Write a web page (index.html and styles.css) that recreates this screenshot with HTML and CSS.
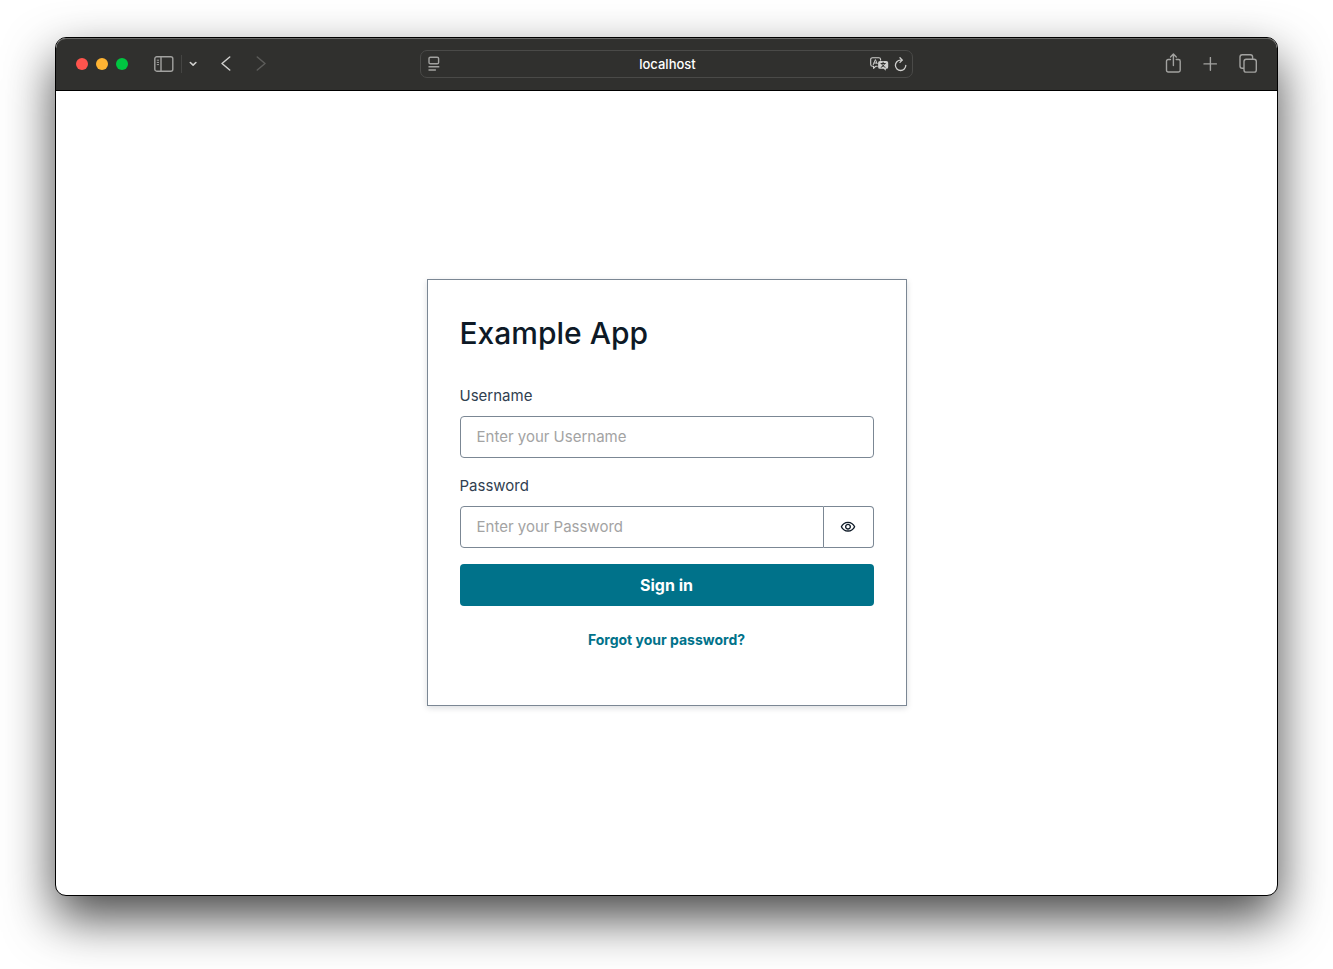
FILE: index.html
```html
<!DOCTYPE html>
<html lang="en">
<head>
<meta charset="utf-8">
<title>Example App</title>
<link rel="stylesheet" href="styles.css">
</head>
<body>
<div class="window">
  <header class="toolbar">
    <div class="toolbar-left">
      <div class="lights">
        <button class="light light-close" aria-label="Close"></button>
        <button class="light light-minimize" aria-label="Minimize"></button>
        <button class="light light-zoom" aria-label="Zoom"></button>
      </div>
      <div class="sidebar-group">
        <button class="tool" aria-label="Sidebar">
          <svg width="20" height="16" viewBox="0 0 20 16" fill="none" stroke="currentColor" stroke-width="1.4"><rect x=".8" y=".8" width="18" height="14.4" rx="2"/><path d="M7 1v14"/><path d="M2.8 4.2h2.2M2.8 6.4h2.2M2.8 8.6h2.2" stroke-width="1"/></svg>
        </button>
        <span class="divider"></span>
        <button class="tool tool-bright" aria-label="Tab groups">
          <svg width="9" height="6" viewBox="0 0 9 6" fill="none" stroke="currentColor" stroke-width="1.6" stroke-linecap="round" stroke-linejoin="round"><path d="M1.3 1.5l2.800 2.700 2.800-2.700"/></svg>
        </button>
      </div>
      <div class="nav-group">
        <button class="tool tool-bright" aria-label="Back">
          <svg width="10" height="16" viewBox="0 0 10 16" fill="none" stroke="currentColor" stroke-width="1.5" stroke-linecap="round" stroke-linejoin="round"><path d="M8.700 1L1 7.500l7.700 6.500"/></svg>
        </button>
        <button class="tool tool-disabled" aria-label="Forward" disabled>
          <svg width="10" height="16" viewBox="0 0 10 16" fill="none" stroke="currentColor" stroke-width="1.5" stroke-linecap="round" stroke-linejoin="round"><path d="M1.300 1L9 7.500l-7.700 6.500"/></svg>
        </button>
      </div>
    </div>
    <div class="address">
      <button class="tool" aria-label="Page menu">
        <svg width="12" height="16" viewBox="0 0 12 16" fill="none" stroke="currentColor"><rect x="1" y="1.200" width="9.600" height="6.600" rx="1.400" stroke-width="1.400"/><path d="M.5 10.700h10.800M.5 14h7.400" stroke-width="1.500"/></svg>
      </button>
      <span class="host">localhost</span>
      <div class="address-actions">
        <button class="tool tool-bright" aria-label="Translate">
          <svg width="19" height="14" viewBox="0 0 19 14" fill="none" stroke="currentColor" stroke-linecap="round" stroke-linejoin="round"><path d="M7.200 9.300H5.600l-2 2V9.300H2.500a1.800 1.800 0 0 1-1.800-1.800v-5A1.800 1.800 0 0 1 2.500.7h6.300a1.800 1.800 0 0 1 1.800 1.800v.6" stroke-width="1.100"/><path d="M3.300 7.600l2.100-5 1.700 4M4 6h2.600" stroke-width="1"/><path d="M10 3.900h6.300a1.900 1.900 0 0 1 1.900 1.900v4.100a1.900 1.900 0 0 1-1.900 1.900h-.5v1.900l-2.100-1.900H10a1.900 1.900 0 0 1-1.900-1.900V5.800A1.900 1.900 0 0 1 10 3.900z" fill="currentColor" stroke="none"/><path d="M13.100 5.200v1M11 6.500h4.300M14.500 6.700c-.5 1.700-1.700 3-3.300 3.500M11.800 6.900c.6 1.600 1.700 2.700 3.300 3.300" stroke="#30302e" stroke-width="1"/></svg>
        </button>
        <button class="tool tool-bright" aria-label="Reload">
          <svg width="13" height="15" viewBox="0 0 13 15" fill="none" stroke="currentColor" stroke-width="1.300" stroke-linecap="round" stroke-linejoin="round"><path d="M7.800 3.100H6.500a5.200 5.200 0 1 0 5.300 5.200"/><path d="M6 .8l2.300 2.300L6 5.400"/></svg>
        </button>
      </div>
    </div>
    <div class="toolbar-right">
      <button class="tool" aria-label="Share">
        <svg width="16" height="22" viewBox="0 0 16 22" fill="none" stroke="currentColor" stroke-width="1.400" stroke-linecap="round" stroke-linejoin="round"><path d="M5.500 6.500H3.200a1.700 1.700 0 0 0-1.700 1.700v9.100A1.700 1.700 0 0 0 3.200 19h10.300a1.700 1.700 0 0 0 1.700-1.700V8.200a1.700 1.700 0 0 0-1.700-1.700h-2.300"/><path d="M8.400 12.500V1M5.500 3.900L8.400 1l2.900 2.900"/></svg>
      </button>
      <button class="tool" aria-label="New tab">
        <svg width="14" height="14" viewBox="0 0 14 14" fill="none" stroke="currentColor" stroke-width="1.400" stroke-linecap="round"><path d="M7.400 .6v12.600M1 6.900h12.400"/></svg>
      </button>
      <button class="tool" aria-label="Tab overview">
        <svg width="18" height="20" viewBox="0 0 18 20" fill="none" stroke="currentColor" stroke-width="1.400" stroke-linejoin="round"><rect x="5" y="5.200" width="12.300" height="12.900" rx="2.200"/><path d="M5 14.300H3.200A2.200 2.200 0 0 1 1 12.100V3A2.200 2.200 0 0 1 3.200.8h8.200A2.200 2.200 0 0 1 13.600 3v2.200"/></svg>
      </button>
    </div>
  </header>
  <main class="page">
    <form class="card">
      <h1 class="title">Example App</h1>
      <div class="fields">
        <div class="field">
          <label class="label" for="username">Username</label>
          <input class="input" id="username" type="text" placeholder="Enter your Username">
        </div>
        <div class="field">
          <label class="label" for="password">Password</label>
          <div class="input-group">
            <input class="input" id="password" type="password" placeholder="Enter your Password">
            <button class="reveal" type="button" aria-label="Show password">
              <svg width="16" height="16" viewBox="0 0 24 24" fill="currentColor"><path d="M12 6c3.790 0 7.170 2.130 8.820 5.500C19.170 14.870 15.790 17 12 17s-7.170-2.130-8.820-5.500C4.830 8.130 8.210 6 12 6m0-2C7 4 2.730 7.110 1 11.500 2.730 15.890 7 19 12 19s9.270-3.110 11-7.500C21.270 7.110 17 4 12 4zm0 5a2.500 2.500 0 0 1 0 5 2.500 2.500 0 0 1 0-5m0-2c-2.480 0-4.500 2.020-4.500 4.500S9.520 16 12 16s4.500-2.020 4.500-4.500S14.480 7 12 7z"/></svg>
            </button>
          </div>
        </div>
        <button class="submit" type="button">Sign in</button>
        <a class="forgot" href="#">Forgot your password?</a>
      </div>
    </form>
  </main>
</div>
</body>
</html>
```
FILE: styles.css
```css
* {
  box-sizing: border-box;
}

body {
  display: flex;
  min-height: 100vh;
  margin: 0;
  padding: 37px 55px 73px;
  background: #fff;
  font-family: Inter, "Liberation Sans", sans-serif;
}

button {
  padding: 0;
  border: 0;
  background: none;
  font: inherit;
}

svg {
  display: block;
}

.window {
  display: flex;
  flex: 1;
  flex-direction: column;
  overflow: hidden;
  border: 1px solid #000;
  border-radius: 11px;
  background: #fff;
  box-shadow: 0 22px 50px rgba(0, 0, 0, 0.72);
}

.toolbar {
  display: grid;
  grid-template-columns: 1fr minmax(0, 493px) 1fr;
  align-items: center;
  height: 53px;
  padding: 0 20px;
  border-bottom: 1px solid #000;
  border-radius: 10px 10px 0 0;
  background: #30302e;
  box-shadow: inset 0 1px 0 #686866;
}

.toolbar-left,
.toolbar-right,
.lights,
.sidebar-group,
.nav-group,
.address-actions {
  display: flex;
  align-items: center;
}

.toolbar-left {
  gap: 23px;
}

.lights {
  gap: 8px;
  margin-right: 3px;
}

.light {
  width: 12px;
  height: 12px;
  border-radius: 50%;
}

.light-close {
  background: #ff544d;
}

.light-minimize {
  background: #ffb433;
}

.light-zoom {
  background: #00c541;
}

.sidebar-group {
  gap: 7px;
}

.divider {
  width: 1px;
  height: 18px;
  background: #454543;
}

.nav-group {
  gap: 25px;
}

.tool {
  color: #a2a2a0;
}

.tool-bright {
  color: #cfcfcd;
}

.tool-disabled {
  color: #5c5c5a;
}

.address {
  display: grid;
  grid-template-columns: 1fr auto 1fr;
  align-items: center;
  height: 28px;
  padding: 0 5px 0 7px;
  border: 1px solid #4a4a48;
  border-radius: 7px;
}

.host {
  color: #fff;
  font-size: 13px;
  font-weight: 500;
}

.address-actions {
  justify-content: flex-end;
  gap: 5px;
}

.toolbar-right {
  justify-content: flex-end;
  gap: 22px;
}

.page {
  display: flex;
  flex: 1;
  align-items: center;
  justify-content: center;
  padding-bottom: 2px;
}

.card {
  width: 480px;
  max-width: 100%;
  padding: 32px 32px 47px;
  border: 1px solid #7b8794;
  box-shadow: 0 2px 6px rgba(13, 26, 38, 0.15);
}

.title {
  margin: 0 0 30px;
  color: #0d1926;
  font-size: 30px;
  font-weight: 500;
  line-height: 42px;
}

.fields {
  display: flex;
  flex-direction: column;
  gap: 16px;
}

.field {
  display: flex;
  flex-direction: column;
  gap: 8px;
}

.label {
  color: #304050;
  font-size: 15px;
  line-height: 24px;
}

.input {
  width: 100%;
  min-width: 0;
  height: 42px;
  padding: 0 16px;
  border: 1px solid #7b8794;
  border-radius: 4px;
  background: #fff;
  color: #0d1926;
  font: inherit;
  font-size: 15px;
}

.input::placeholder {
  color: #a3a3a3;
  opacity: 1;
}

.input-group {
  display: flex;
}

.input-group .input {
  flex: 1;
  border-radius: 4px 0 0 4px;
}

.reveal {
  display: flex;
  align-items: center;
  justify-content: center;
  width: 50px;
  border: 1px solid #7b8794;
  border-left: 0;
  border-radius: 0 4px 4px 0;
  color: #0d1926;
}

.submit {
  height: 42px;
  border-radius: 4px;
  background: #00728a;
  color: #fff;
  font-size: 16px;
  font-weight: 700;
}

.forgot {
  align-self: center;
  color: #00728a;
  font-size: 14px;
  font-weight: 700;
  line-height: 36px;
  text-decoration: none;
}
```
